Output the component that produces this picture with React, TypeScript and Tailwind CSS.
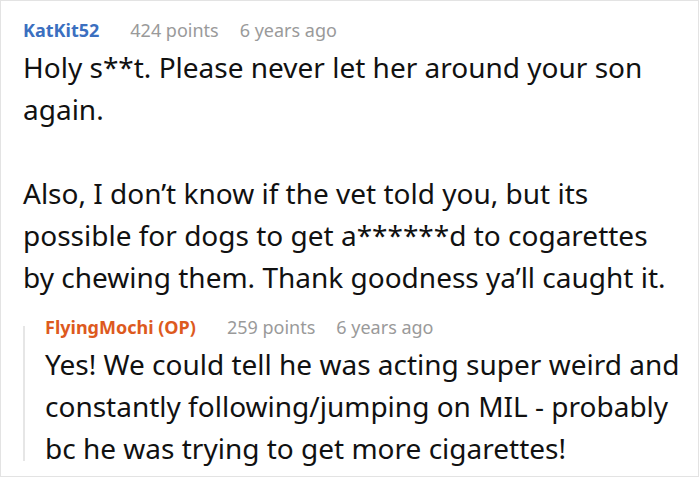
export default function App() {
  return (
    <div className="w-[699px] h-[477px] border border-[#e3e3e3] bg-white overflow-hidden" style={{ fontFamily: '"Noto Sans", sans-serif' }}>
      <div className="pl-[22px] pr-[6px] pt-[17px]">
        <div className="flex items-baseline text-[18px] leading-[24px]">
          <span className="font-bold text-[#3b6fc0]">KatKit52</span>
          <span className="ml-[31px] text-[#9a9a9a]">424 points</span>
          <span className="ml-[21px] text-[#9a9a9a]">6 years ago</span>
        </div>
        <p className="mt-[4px] pr-[14px] text-[28px] leading-[42px] text-[#111]">
          Holy s**t. Please never let her around your son again.
          <br />
          <br />
          Also, I don’t know if the vet told you, but its possible for dogs to get a******d to cogarettes by chewing them. Thank goodness ya’ll caught it.
        </p>

        {/* reply */}
        <div className="mt-[17px] flex">
          <div className="mt-[11px] mb-[8px] w-[2px] shrink-0 bg-[#e6e6e6]" />
          <div className="pl-[20px]">
            <div className="flex items-baseline text-[18px] leading-[24px]">
              <span className="font-bold text-[#dd5a1e]">FlyingMochi (OP)</span>
              <span className="ml-[31px] text-[#9a9a9a]">259 points</span>
              <span className="ml-[21px] text-[#9a9a9a]">6 years ago</span>
            </div>
            <p className="mt-[4px] text-[28px] leading-[42px] text-[#111]">
              Yes! We could tell he was acting super weird and constantly following/jumping on MIL - probably bc he was trying to get more cigarettes!
            </p>
          </div>
        </div>
      </div>
    </div>
  );
}
